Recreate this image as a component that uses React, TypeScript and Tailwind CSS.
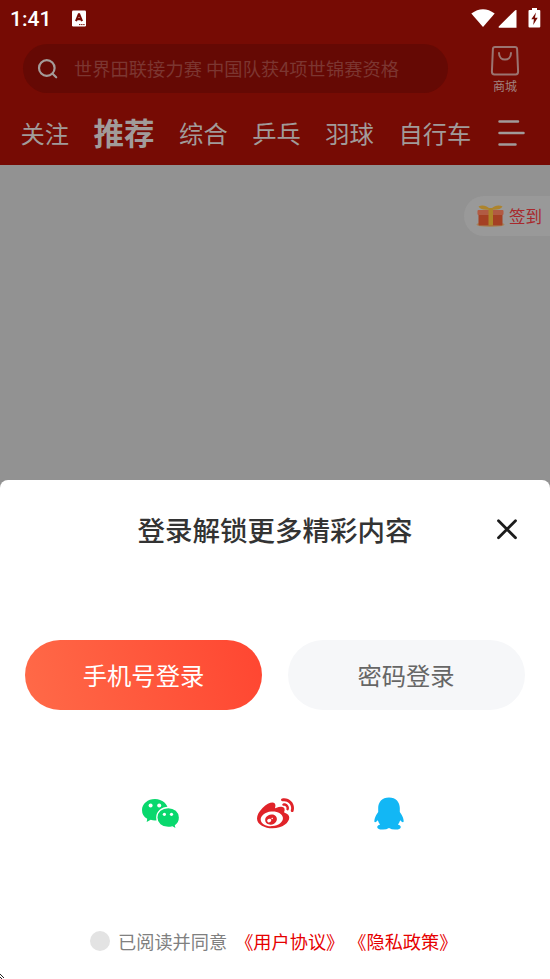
import React from "react";
import { FaWeibo } from "react-icons/fa6";

const tabs = ["关注", "推荐", "综合", "乒乓", "羽球", "自行车"];

function StatusBar() {
  return (
    <div className="flex h-[36px] items-center pl-[10px] pr-[8px] text-white">
      <span className="w-[62px] pt-[3px] font-['Roboto',sans-serif] text-[21px] font-medium leading-none tracking-[0px]">1:41</span>
      <svg className="mt-px" width="15" height="17" viewBox="0 0 15 17">
        <rect x="0" y="0.5" width="14" height="16" rx="1.2" fill="white" />
        <path d="M4 11.2 6.8 4.3H7.2L10 11.2M5.2 9.1H8.8" fill="none" stroke="#760b04" strokeWidth="2.1" />
        <path d="M7 14.6H13" stroke="#760b04" strokeWidth="1" strokeDasharray="1.4 0.7" />
      </svg>
      <svg className="ml-auto" width="72" height="22" viewBox="0 0 72 22">
        <path d="M1.3 7.1Q13 -1.8 24.7 7.1L13 20.5Z" fill="white" transform="translate(0 -0.5)" />
        <path d="M46.5 3V20.7H29Q28 20.2 29 19.2L45.2 3.2Z" fill="white" />
        <path d="M62 1H67V3H69.5Q70.3 3 70.3 4V19.5Q70.3 20.5 69.3 20.5H59.5Q58.5 20.5 58.5 19.5V4Q58.5 3 59.5 3H62Z" fill="white" />
        <path d="M66 5.5 61.3 12.3H63.9L63.2 18 67.7 10.8H64.9Z" fill="#760b04" />
      </svg>
    </div>
  );
}

function Header() {
  return (
    <header className="h-[165px] shrink-0 bg-[#760b04]">
      <StatusBar />
      <div className="flex h-[66px] pl-[23px] pt-[8px]">
        <div className="flex h-[49px] w-[425px] items-center rounded-full bg-[#650904] pl-[14px]">
          <svg width="22" height="22" viewBox="0 0 22 22" fill="none" stroke="#a49b99" strokeWidth="2.2" strokeLinecap="round">
            <circle cx="9.8" cy="10" r="7.8" />
            <path d="M15.6 15.8 19.2 19.3" />
          </svg>
          <span className="ml-[15px] whitespace-nowrap text-[18.3px] leading-none text-[#7c3631]">世界田联接力赛 中国队获4项世锦赛资格</span>
        </div>
        <div className="ml-[42px] flex w-[30px] flex-col items-center">
          <svg className="mt-px" width="30" height="32" viewBox="0 0 30 32" fill="none" stroke="#9b7471" strokeWidth="2">
            <path d="M5 2H25Q27 2 27.1 4L28.1 26.5Q28.1 29.5 25.6 29.5H4.4Q1.9 29.5 1.9 26.5L2.9 4Q3 2 5 2Z" />
            <path d="M9 8C9 16.8 21 16.8 21 8" strokeLinecap="round" />
          </svg>
          <span className="mt-[3px] whitespace-nowrap text-[12px] leading-none text-[#a18481]">商城</span>
        </div>
      </div>
      <nav className="flex h-[62px] items-center gap-[24.5px] pl-[20.5px] text-[24.3px] leading-none text-[#a19b9a]">
        {tabs.map((t) => (
          <span key={t} className={t === "推荐" ? "whitespace-nowrap pb-[2px] text-[30.5px] font-bold" : "whitespace-nowrap"}>{t}</span>
        ))}
        <svg className="ml-[2px]" width="28" height="28" viewBox="0 0 28 28" stroke="#a19b9a" strokeWidth="2.5" strokeLinecap="round">
          <path d="M1.5 2.6H20M1.5 14H25.5M1.5 25.6H17.5" />
        </svg>
      </nav>
    </header>
  );
}

function Gift() {
  return (
    <svg width="30" height="24" viewBox="0 0 30 24">
      <ellipse cx="14.5" cy="20.5" rx="14" ry="2.6" fill="#a4845c" />
      <rect x="2.5" y="8" width="24" height="13.5" rx="1" fill="#a44023" />
      <rect x="1.5" y="6" width="26" height="5" rx="1" fill="#b15b43" />
      <rect x="12.5" y="4" width="4.5" height="17.5" fill="#ac8428" />
      <path d="M14.5 5.5C11 1.5 6 .5 2.5 2.5Q5 6.5 14.5 5.5C18 1.5 23 .5 26.5 2.5Q24 6.5 14.5 5.5Z" fill="#ad842c" />
    </svg>
  );
}

function WeChat() {
  return (
    <svg width="38" height="32" viewBox="0 0 38 32">
      <path d="M13 1C5.8 1 0 5.8 0 12Q0 18 5.2 20.7L4.7 24 8.7 21.8Q10.7 22.4 13 22.4C20.2 22.4 26 17.8 26 12S20.2 1 13 1Z" fill="#09d86d" />
      <path d="M26.2 9.5C19.8 9.5 14.8 13.8 14.8 19.5S19.8 29.5 26.2 29.5Q28.5 29.5 30.4 28.9L34.4 31.2 33.5 27.6Q37.5 24.8 37.5 19.5C37.5 13.8 32.4 9.5 26.2 9.5Z" fill="#09d86d" stroke="white" strokeWidth="1.3" />
      <g fill="white"><circle cx="8.6" cy="7.5" r="2" /><circle cx="17.2" cy="7.5" r="2" /><circle cx="22.4" cy="16.3" r="1.6" /><circle cx="29.5" cy="16.3" r="1.6" /></g>
    </svg>
  );
}

function QQ() {
  return (
    <svg className="block" width="30" height="34" viewBox="0 0 30 34" fill="#12b7f5">
      <path d="M15 .5C8 .5 4.2 5.2 4.2 11V15Q.3 20.5 .3 24.2Q.7 26.7 3.8 23.3Q4.5 25.7 6.2 27.5Q3 28.5 3.2 30.3Q3.8 32.8 9 32.6Q12.5 32.6 15 31Q17.5 32.6 21 32.6Q26.2 32.8 26.8 30.3Q27 28.5 23.8 27.5Q25.5 25.7 26.2 23.3Q29.3 26.7 29.7 24.2Q29.7 20.5 25.8 15V11C25.8 5.2 22 .5 15 .5Z" />
    </svg>
  );
}

function LoginSheet() {
  return (
    <section className="flex flex-1 flex-col rounded-t-[8px] bg-white">
      <div className="relative flex h-[99px] items-center justify-center">
        <h1 className="whitespace-nowrap text-[27.5px] font-medium leading-none text-[#333]">登录解锁更多精彩内容</h1>
        <button aria-label="关闭" className="absolute right-[32px] top-[39px]">
          <svg className="block" width="22" height="21" viewBox="0 0 22 21" stroke="#1c1c1c" strokeWidth="2.8" strokeLinecap="round">
            <path d="M2.5 1.8 19.5 18.8M19.5 1.8 2.5 18.8" />
          </svg>
        </button>
      </div>
      <div className="mt-[61px] flex justify-center gap-[26px] text-[24.3px] leading-none">
        <button className="h-[70px] w-[237px] rounded-full bg-[linear-gradient(75deg,#ff6a48,#ff4631)] text-white">手机号登录</button>
        <button className="h-[70px] w-[237px] rounded-full bg-[#f6f7f9] pr-px text-[#666]">密码登录</button>
      </div>
      <div className="mt-[87px] flex h-[34px] items-center pl-[142px]">
        <WeChat />
        <FaWeibo className="ml-[77px] h-[37px] w-[37px] text-[#e02329]" />
        <span className="ml-[80px]"><QQ /></span>
      </div>
      <div className="mt-[100px] flex h-[20px] items-center whitespace-nowrap pl-[90px] text-[18.2px] leading-none text-[#808080]">
        <span className="mr-[8px] h-[20px] w-[20px] rounded-full bg-[#e3e3e3]" />
        <span>已阅读并同意</span>
        <span className="ml-[8px] text-[#e60000]">《用户协议》</span>
        <span className="ml-[4px] text-[#e60000]">《隐私政策》</span>
      </div>
      <svg className="mt-auto" width="5" height="5" viewBox="0 0 5 5" fill="#222" shapeRendering="crispEdges">
        <path d="M0 0H1V1H0ZM1 1H2V2H1ZM2 2H3V3H2ZM3 3H4V4H3ZM0 3H1V4H0ZM1 4H2V5H1Z" />
      </svg>
    </section>
  );
}

export default function App() {
  return (
    <div className="flex h-[979px] w-[550px] flex-col overflow-hidden bg-[#929292] font-['Noto_Sans_CJK_SC',sans-serif]">
      <Header />
      <main className="flex h-[315px] shrink-0 justify-end pt-[31px]">
        <div className="flex h-[40px] w-[86px] items-center rounded-l-full bg-[#999] pl-[12px]">
          <Gift />
          <span className="ml-[3px] whitespace-nowrap text-[16.5px] leading-none text-[#a8282c]">签到</span>
        </div>
      </main>
      <LoginSheet />
    </div>
  );
}
